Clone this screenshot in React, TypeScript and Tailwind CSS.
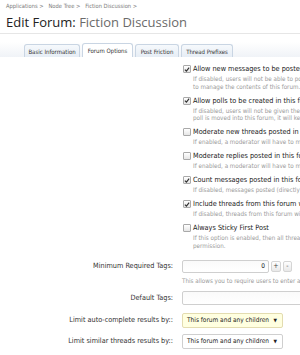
import React from "react";

const Check = ({ checked }: { checked: boolean }) => (
  <span className="mt-[1px] ml-[1px] flex h-[8px] w-[8px] shrink-0 items-center justify-center rounded-[1px] border border-[#a9a9a9] bg-gradient-to-b from-white to-[#e6e6e6]">
    {checked && (
      <svg width="7" height="7" viewBox="0 0 7 7">
        <path d="M1 3.6 L2.8 5.4 L6 1.2" fill="none" stroke="#333" strokeWidth="1.4" />
      </svg>
    )}
  </span>
);

const opts: { label: string; hints: string[]; checked: boolean }[] = [
  {
    label: "Allow new messages to be posted in this forum",
    hints: ["If disabled, users will not be able to post new messages in this forum. Moderators will still be able", "to manage the contents of this forum."],
    checked: true,
  },
  {
    label: "Allow polls to be created in this forum",
    hints: ["If disabled, users will not be given the option to create polls. If a thread with a", "poll is moved into this forum, it will keep its poll."],
    checked: true,
  },
  {
    label: "Moderate new threads posted in this forum",
    hints: ["If enabled, a moderator will have to manually approve threads."],
    checked: false,
  },
  {
    label: "Moderate replies posted in this forum",
    hints: ["If enabled, a moderator will have to manually approve replies."],
    checked: false,
  },
  {
    label: "Count messages posted in this forum",
    hints: ["If disabled, messages posted (directly) in this forum will not count."],
    checked: true,
  },
  {
    label: "Include threads from this forum when users click New Posts",
    hints: ["If disabled, threads from this forum will not appear in the list."],
    checked: true,
  },
  {
    label: "Always Sticky First Post",
    hints: ["If this option is enabled, then all threads will have the first post sticky, regardless of", "permission."],
    checked: false,
  },
];

const Label = ({ children }: { children: React.ReactNode }) => (
  <div className="flex items-center justify-end whitespace-nowrap text-[7.25px] text-[#333]">{children}</div>
);

const Select = ({ yellow }: { yellow?: boolean }) => (
  <div
    className={`flex h-[15px] w-[101px] items-center justify-between rounded-[2px] border pl-[4px] pr-[5px] text-[6.5px] text-[#222] whitespace-nowrap ${
      yellow ? "border-[#e3dcb0] bg-[#ffffe0]" : "border-[#cfcfcf] bg-white"
    }`}
  >
    <span>This forum and any children</span>
    <span className="text-[5px]">▼</span>
  </div>
);

export default function App() {
  return (
    <div
      className="relative h-[355px] w-[300px] overflow-hidden bg-white text-[#333]"
      style={{ fontFamily: '"DejaVu Sans Condensed", "DejaVu Sans", sans-serif' }}
    >
      <div className="pl-[6px] pt-[2px] text-[5.75px] leading-[8px] text-[#7a7a7a] whitespace-nowrap">
        Applications &gt;&nbsp;&nbsp; Node Tree &gt;&nbsp;&nbsp; Fiction Discussion &gt;
      </div>
      <h1
        className="mt-[4px] pl-[6px] text-[13px] leading-[16px] text-[#222] whitespace-nowrap"
        style={{ fontFamily: '"Open Sans", sans-serif' }}
      >
        Edit Forum: <span className="text-[#6a6a6a]">Fiction Discussion</span>
      </h1>
      <div className="mt-[3px] h-px w-full bg-[#e6e6e6]" />

      <div className="mt-[8px] flex h-[15px] items-end gap-[2px] bg-gradient-to-b from-white to-[#f0f3f7] pl-[24px]">
        <div className="flex h-[13px] w-[56px] items-center justify-center rounded-t-[3px] border border-b-0 border-[#c9d5e3] bg-gradient-to-b from-[#f6f9fc] to-[#e6edf5] text-[6px] whitespace-nowrap">
          Basic Information
        </div>
        <div className="flex h-[14px] w-[51px] items-center justify-center rounded-t-[3px] border border-b-0 border-[#c9d5e3] bg-white text-[6px] whitespace-nowrap">
          Forum Options
        </div>
        <div className="flex h-[13px] w-[44px] items-center justify-center rounded-t-[3px] border border-b-0 border-[#c9d5e3] bg-gradient-to-b from-[#f6f9fc] to-[#e6edf5] text-[6px] whitespace-nowrap">
          Post Friction
        </div>
        <div className="flex h-[13px] w-[52px] items-center justify-center rounded-t-[3px] border border-b-0 border-[#c9d5e3] bg-gradient-to-b from-[#f6f9fc] to-[#e6edf5] text-[6px] whitespace-nowrap">
          Thread Prefixes
        </div>
      </div>

      <div className="flex flex-col gap-[5.5px] pl-[182px] pt-[7px]">
        {opts.map((o) => (
          <div key={o.label} className="flex flex-col">
            <div className="flex items-start gap-[2px]">
              <Check checked={o.checked} />
              <span className="text-[7.25px] leading-[10px] text-[#222] whitespace-nowrap">{o.label}</span>
            </div>
            <div className="mt-[1px] pl-[11px]">
              {o.hints.map((h) => (
                <div key={h} className="text-[6.25px] leading-[7.5px] text-[#9a9a9a] whitespace-nowrap">
                  {h}
                </div>
              ))}
            </div>
          </div>
        ))}
      </div>

      <div className="mt-[11px] grid grid-cols-[173px_1fr] gap-x-[9px]">
        <Label>Minimum Required Tags:</Label>
        <div className="flex items-center gap-[2px]">
          <div className="flex h-[13px] w-[87px] items-center justify-end rounded-[2px] border border-[#cfcfcf] bg-gradient-to-b from-[#fafafa] to-white pr-[3px] text-[6.5px] text-[#222]">
            0
          </div>
          <div className="flex h-[11px] w-[10px] items-center justify-center rounded-[2px] border border-[#d5d5d5] bg-gradient-to-b from-white to-[#e8e8e8] text-[7px] leading-none text-[#444]">
            +
          </div>
          <div className="flex h-[11px] w-[9px] items-center justify-center rounded-[2px] border border-[#d5d5d5] bg-gradient-to-b from-white to-[#e8e8e8] text-[7px] leading-none text-[#444]">
            -
          </div>
        </div>
        <div />
        <div className="mt-[3.5px] text-[6.25px] leading-[7.5px] text-[#9a9a9a] whitespace-nowrap">
          This allows you to require users to enter at least this many tags.
        </div>

        <div className="col-span-2 h-[7px]" />
        <Label>Default Tags:</Label>
        <div className="h-[14px] w-[140px] rounded-[2px] border border-[#cfcfcf] bg-gradient-to-b from-[#fafafa] to-white" />

        <div className="col-span-2 h-[8px]" />
        <Label>Limit auto-complete results by::</Label>
        <Select yellow />

        <div className="col-span-2 h-[6px]" />
        <Label>Limit similar threads results by::</Label>
        <Select />
      </div>
    </div>
  );
}
